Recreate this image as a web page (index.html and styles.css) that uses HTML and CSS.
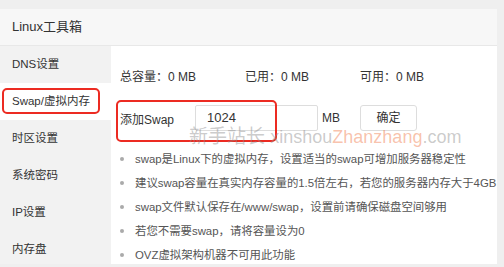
FILE: index.html
```html
<!DOCTYPE html>
<html lang="zh">
<head>
<meta charset="utf-8">
<link rel="stylesheet" href="styles.css">
</head>
<body>
<div class="card">
  <div class="header">Linux工具箱</div>
  <div class="main">
    <ul class="side">
      <li class="item">DNS设置</li>
      <li class="item active">Swap/虚拟内存<span class="mark mark-side"></span></li>
      <li class="item">时区设置</li>
      <li class="item">系统密码</li>
      <li class="item">IP设置</li>
      <li class="item">内存盘</li>
    </ul>
    <div class="content">
      <div class="stats">
        <span class="stat s1">总容量：0 MB</span>
        <span class="stat s2">已用：0 MB</span>
        <span class="stat s3">可用：0 MB</span>
      </div>
      <div class="addrow">
        <span class="label">添加Swap</span>
        <span class="input">1024</span>
        <span class="unit">MB</span>
        <span class="btn">确定</span>
        <span class="mark mark-row"></span>
      </div>
      <ul class="tips">
        <li>swap是Linux下的虚拟内存，设置适当的swap可增加服务器稳定性</li>
        <li>建议swap容量在真实内存容量的1.5倍左右，若您的服务器内存大于4GB</li>
        <li>swap文件默认保存在/www/swap，设置前请确保磁盘空间够用</li>
        <li>若您不需要swap，请将容量设为0</li>
        <li>OVZ虚拟架构机器不可用此功能</li>
      </ul>
      <div class="watermark">新手站长 <span class="wm-l">xinshou</span><span class="wm-l wm-o">Zhanzhang</span><span class="wm-l">.com</span></div>
    </div>
  </div>
</div>
</body>
</html>
```

FILE: styles.css
```css
* { box-sizing: border-box; }
html, body { margin: 0; padding: 0; }
body {
  background: #efefef;
  padding-top: 9px;
  font-family: "Liberation Sans", "Noto Sans CJK SC", sans-serif;
  color: #333;
  width: 504px;
  height: 267px;
  overflow: hidden;
}
.card {
  width: 497px;
  height: 255px;
  background: #fff;
  overflow: hidden;
}
.header {
  height: 37px;
  background: #f7f7f7;
  border-bottom: 1px solid #e8e8e8;
  padding-left: 12px;
  font-size: 13px;
  line-height: 36px;
  color: #333;
}
.main {
  display: flex;
  height: 218px;
}
.side {
  list-style: none;
  margin: 0;
  padding: 0;
  width: 111px;
  flex: none;
  background: #f2f2f2;
}
.item {
  position: relative;
  height: 37px;
  line-height: 37px;
  padding-left: 12px;
  font-size: 11.5px;
  color: #333;
}
.item.active { background: #fff; }
.mark {
  position: absolute;
  border: 2px solid #ec2b22;
  border-radius: 5px;
}
.mark-side { left: 2px; top: 5px; width: 98px; height: 26px; }
.content {
  position: relative;
  flex: 1;
  padding-left: 9px;
  padding-top: 21px;
}
.stats {
  display: flex;
  height: 20px;
  line-height: 20px;
  font-size: 12px;
  color: #333;
}
.s1 { width: 125px; }
.s2 { width: 115px; }
.addrow {
  position: relative;
  display: flex;
  align-items: center;
  height: 26px;
  margin-top: 18px;
  font-size: 12px;
}
.label { width: 75px; }
.input {
  width: 123px;
  height: 26px;
  border: 1px solid #ddd;
  border-radius: 2px;
  padding-left: 11px;
  line-height: 24px;
  font-size: 13px;
  color: #333;
}
.unit { width: 42px; padding-left: 4px; }
.btn {
  width: 57px;
  height: 26px;
  border: 1px solid #ddd;
  border-radius: 3px;
  text-align: center;
  line-height: 24px;
  font-size: 12px;
}
.mark-row { left: -4px; top: -5px; width: 161px; height: 42px; }
.tips {
  list-style: none;
  margin: 16px 0 0;
  padding: 0;
}
.tips li {
  position: relative;
  height: 24px;
  line-height: 24px;
  padding-left: 15px;
  font-size: 11.4px;
  color: #555;
  white-space: nowrap;
}
.tips li::before {
  content: "";
  position: absolute;
  left: 0;
  top: 10px;
  width: 4px;
  height: 4px;
  border-radius: 50%;
  background: #aaa;
}
.watermark {
  position: absolute;
  left: 78px;
  top: 80px;
  font-size: 19px;
  line-height: 22px;
  color: rgba(140, 140, 140, 0.45);
  white-space: nowrap;
  pointer-events: none;
}
.wm-l { font-size: 18px; }
.wm-o { color: rgba(240, 120, 70, 0.45); }
```
